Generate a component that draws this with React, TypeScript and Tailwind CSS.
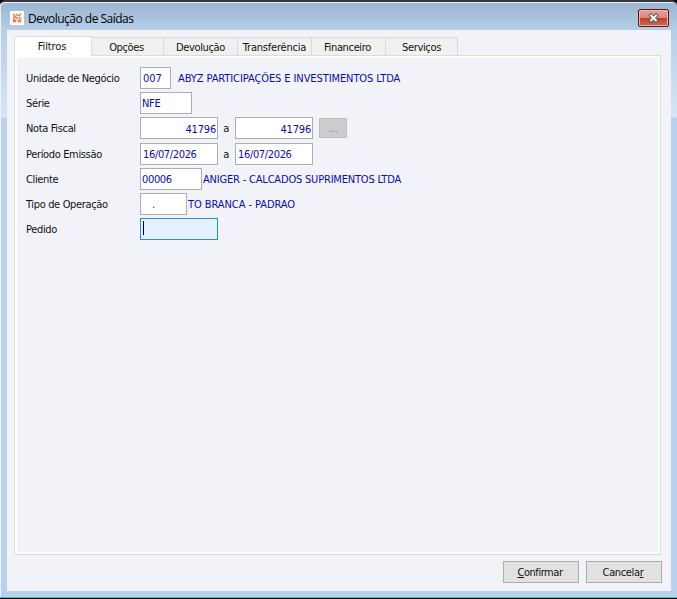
import React from 'react';
import clsx from 'clsx';

interface TabProps {
  label: string;
  width: string;
  active?: boolean;
}

const tabs: TabProps[] = [
  { label: 'Filtros', width: 'w-[78px] tracking-[-0.1px]', active: true },
  { label: 'Opções', width: 'w-[72px] pr-0.5' },
  { label: 'Devolução', width: 'w-[74px]' },
  { label: 'Transferência', width: 'w-[74px] tracking-[-0.2px]' },
  { label: 'Financeiro', width: 'w-[74px] pr-0.5' },
  { label: 'Serviços', width: 'w-[72px]' },
];

const Tab: React.FC<TabProps> = ({ label, width, active }) => (
  <button
    className={clsx(
      'flex items-center justify-center whitespace-nowrap',
      width,
      active
        ? 'relative z-10 h-5 -mb-px border-t border-l border-r border-[#dcdcdc] bg-white pr-0.5 pt-px'
        : 'h-[18px] border-t border-r border-[#dadada] bg-[#f0f0f0] pt-[3px]'
    )}
  >
    {label}
  </button>
);

interface FieldProps {
  value?: string;
  className?: string;
}

const Field: React.FC<FieldProps> = ({ value, className }) => (
  <div className={clsx('flex h-[22px] shrink-0 items-center border border-[#abadb3] bg-white whitespace-pre text-[#0c0ca8]', className)}>
    <span className="pt-[3px]">{value}</span>
  </div>
);

const Row: React.FC<{ label: string; children: React.ReactNode }> = ({ label, children }) => (
  <div className="flex h-[25.2px] items-start whitespace-nowrap">
    <span className="w-[114px] shrink-0 pt-px leading-[22px]">{label}</span>
    {children}
  </div>
);

const Description: React.FC<{ text: string; className?: string }> = ({ text, className }) => (
  <span className={clsx('pt-px leading-[22px] text-[#0c0ca8]', className)}>{text}</span>
);

const Separator = () => <span className="w-[17px] pr-px pt-px text-center leading-[22px]">a</span>;

const AppIcon = () => (
  <svg width="14" height="14" viewBox="0 0 14 14" className="mt-[3px]">
    <rect width="14" height="14" rx="1" fill="#fff" />
    <g stroke="#f4763f" strokeWidth="1.5" fill="none">
      <path d="M3 3l2 2M6 3l2 2M11 2.5L8.5 5M3 7l3-1.5M6 6l2 2M9 6l2 2M3 9.5l2-1.5M3.5 11.5V9.5l2 0v2M8.5 11.5V9.5h2v2" />
    </g>
  </svg>
);

const CloseButton = () => (
  <button className="mt-[4px] flex h-[18px] w-[31px] items-center justify-center rounded-[2px] border border-[#5a1822] bg-[linear-gradient(#e8a598,#d98676_48%,#bd4029_50%,#cf6a4e)] shadow-[inset_0_0_0_1px_#eab4aa]">
    <svg width="12" height="10" viewBox="0 0 12 10">
      <path d="M3 2.5l5 5M8 2.5l-5 5" stroke="#555a68" strokeWidth="3.8" strokeLinecap="square" />
      <path d="M3 2.5l5 5M8 2.5l-5 5" stroke="#fff" strokeWidth="1.9" strokeLinecap="square" />
    </svg>
  </button>
);

export default function App() {
  return (
    <div className="flex h-[599px] w-[677px] flex-col overflow-hidden border-b border-black bg-black font-['DejaVu_Sans_Condensed','DejaVu_Sans',sans-serif] text-[11px] tracking-[-0.35px] text-[#111]">
      <div className="flex min-h-0 flex-1 flex-col rounded-t-[5px] border-t-2 border-b border-t-[#35353b] border-b-[#30c4e6] bg-[linear-gradient(#99b4d1_0px,#b6cee6_28px,#d6e5f4_115px,#b9d1ea_116px)] pr-[6px] pb-[6px] pl-[7px] shadow-[inset_1px_1px_0_#eef3f9]">
        <header className="flex h-7 shrink-0 items-center pl-[3px] pr-0.5">
          <AppIcon />
          <h1 className="ml-[4px] flex-1 pt-1.5 font-['Open_Sans','Noto_Sans',sans-serif] text-[12px] tracking-[-0.5px] text-black">
            Devolução de Saídas
          </h1>
          <CloseButton />
        </header>

        <main className="flex min-h-0 flex-1 flex-col bg-[#f2f3f9] pl-[7px] pr-[10px] pt-[6px]">
          <nav className="flex items-end">
            {tabs.map((tab) => (
              <Tab key={tab.label} {...tab} />
            ))}
          </nav>

          <section className="h-[500px] border border-[#dcdcdc] p-[11px] shadow-[inset_0_0_0_2px_#fdfdfe]">
            <Row label="Unidade de Negócio">
              <Field value="007" className="w-[31px] pl-[2px] tracking-[-0.1px]" />
              <Description text="ABYZ PARTICIPAÇÕES E INVESTIMENTOS LTDA" className="ml-[7px] tracking-[-0.09px]" />
            </Row>
            <Row label="Série">
              <Field value="NFE" className="w-[52px] pl-px" />
            </Row>
            <Row label="Nota Fiscal">
              <Field value="41796" className="w-[78px] justify-end pr-px tracking-[-0.2px]" />
              <Separator />
              <Field value="41796" className="w-[78px] justify-end pr-px tracking-[-0.2px]" />
              <button className="ml-[6px] mt-px h-5 w-7 border border-[#bfbfbf] bg-[#cccccc] pt-px text-[#838383]">...</button>
            </Row>
            <Row label="Período Emissão">
              <Field value="16/07/2026" className="w-[78px] pl-[2px]" />
              <Separator />
              <Field value="16/07/2026" className="w-[78px] pl-[2px]" />
            </Row>
            <Row label="Cliente">
              <Field value="00006" className="w-[62px] pl-px" />
              <Description text="ANIGER - CALCADOS SUPRIMENTOS LTDA" className="ml-px tracking-[-0.19px]" />
            </Row>
            <Row label="Tipo de Operação">
              <Field value="." className="w-[47px] pl-[11px]" />
              <Description text="TO BRANCA - PADRAO" className="ml-px tracking-[-0.07px]" />
            </Row>
            <Row label="Pedido">
              <div className="h-[22px] w-[78px] border border-[#2b8bdc] bg-[#e5f1fe] pl-[2px] pt-[2px]">
                <div className="h-[14px] w-px bg-black" />
              </div>
            </Row>
          </section>

          <footer className="-mr-px mt-[6px] flex justify-end gap-[7px]">
            <button className="h-[22px] w-[76px] border border-[#adadad] bg-[#e1e1e1] pt-0.5 pr-0.5 tracking-[-0.45px]">
              <u>C</u>onfirmar
            </button>
            <button className="h-[22px] w-[76px] border border-[#adadad] bg-[#e1e1e1] pt-0.5 pr-0.5">
              Cancela<u>r</u>
            </button>
          </footer>
        </main>
      </div>
    </div>
  );
}
